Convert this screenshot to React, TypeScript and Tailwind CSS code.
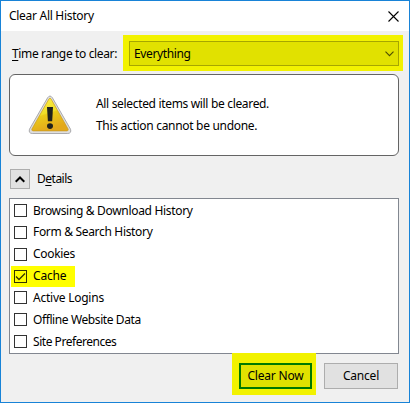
import React from "react";

const items = [
  { label: "Browsing & Download History", spacing: "tracking-[-0.32px]" },
  { label: "Form & Search History", spacing: "tracking-[-0.32px]" },
  { label: "Cookies", spacing: "tracking-[-0.3px]" },
  { label: "Cache", spacing: "tracking-[-0.2px]", checked: true },
  { label: "Active Logins", spacing: "tracking-[-0.24px]" },
  { label: "Offline Website Data", spacing: "tracking-[-0.4px]" },
  { label: "Site Preferences", spacing: "tracking-[-0.46px]" },
];

function WarningIcon() {
  return (
    <svg width="44" height="40" viewBox="0 0 44 40">
      <defs>
        <linearGradient id="gold" x1="0" y1="0" x2="0.35" y2="1">
          <stop offset="0" stopColor="#fff04a" />
          <stop offset="0.53" stopColor="#f0de28" />
          <stop offset="0.57" stopColor="#ebcb18" />
          <stop offset="1" stopColor="#e3a81c" />
        </linearGradient>
      </defs>
      <path d="M19.7 2.6Q22 -0.5 24.3 2.6L42.5 34.2Q43.7 38.3 39.8 38.5H4.2Q.3 38.3 1.5 34.2Z" fill="#dededf" stroke="#aaaaad" />
      <path d="M20.7 4.3Q22 1.9 23.3 4.3L40.1 34Q40.7 35.7 39 35.9H5Q3.3 35.7 3.9 34Z" fill="url(#gold)" stroke="#c99b20" strokeWidth=".7" />
      <path d="M19 12H25L24.2 26.2H19.9Z" fill="#20211d" />
      <ellipse cx="22" cy="31.1" rx="3" ry="2.8" fill="#20211d" />
    </svg>
  );
}

export default function App() {
  return (
    <div className="flex h-[403px] w-[410px] flex-col overflow-hidden border border-[#1883d7] bg-[#f0f0f0] font-['Noto_Sans','Open_Sans',sans-serif] text-[12px] leading-4 whitespace-nowrap text-black">
      <header className="flex h-[30px] shrink-0 items-center justify-between bg-white pr-[10px] pl-2">
        <h1 className="tracking-[-0.29px]">Clear All History</h1>
        <svg width="11" height="11" viewBox="0 0 11 11" stroke="#000" strokeWidth="1.1">
          <path d="M.5 .5L10.5 10.5M10.5 .5L.5 10.5" />
        </svg>
      </header>
      <div className="mt-1 flex h-9 shrink-0 items-center pl-[11px]">
        <label className="w-[111px] pt-px tracking-[-0.36px]">
          <span className="underline underline-offset-2">T</span>ime range to clear:
        </label>
        <div className="h-9 w-[280px] bg-[#f2f200] p-1.5 pr-1">
          <div className="flex h-[25px] w-[270px] items-center justify-between border border-[#a6a600] bg-[#e1e100] pr-1 pl-1">
            <span className="pt-px tracking-[-0.38px]">Everything</span>
            <svg width="9" height="6" viewBox="0 0 9 6" fill="none" stroke="#4d4d00" strokeWidth="1.1">
              <path d="M.5 .7L4.5 4.7L8.5 .7" />
            </svg>
          </div>
        </div>
      </div>
      <section className="mt-[3px] ml-2 flex h-[82px] w-[390px] shrink-0 items-center rounded-[6px] border border-[#646464] bg-white pl-[18px]">
        <WarningIcon />
        <div className="ml-6 leading-[22px]">
          <p className="tracking-[-0.33px]">All selected items will be cleared.</p>
          <p className="tracking-[-0.3px]">This action cannot be undone.</p>
        </div>
      </section>
      <div className="mt-[13px] ml-[9px] flex h-5 shrink-0 items-center gap-[7px]">
        <button className="flex h-5 w-5 items-center justify-center border border-[#adadad] bg-[#e1e1e1]">
          <svg width="10" height="7" viewBox="0 0 10 7" fill="none" stroke="#000" strokeWidth="2">
            <path d="M.7 5.8L5 1.5L9.3 5.8" />
          </svg>
        </button>
        <span className="tracking-[-0.5px]">D<span className="underline underline-offset-2">e</span>tails</span>
      </div>
      <section className="mt-[9px] ml-2 flex h-[156px] w-[390px] shrink-0 flex-col border border-[#828790] bg-white pt-px pl-px">
        {items.map((item) => (
          <label key={item.label} className="flex h-[22px] items-start">
            <span className={`flex h-[21px] items-center gap-1.5 pl-[3px] ${item.checked ? "w-16 bg-[#ffff00]" : ""}`}>
              <span className={`flex h-[13px] w-[13px] shrink-0 items-center justify-center border ${item.checked ? "border-[#333300]" : "border-[#333333]"}`}>
                {item.checked && (
                  <svg width="11" height="11" viewBox="0 0 11 11" fill="none" stroke="#333300" strokeWidth="1.3">
                    <path d="M1 5.5L4 8.5L10 2.5" />
                  </svg>
                )}
              </span>
              <span className={item.spacing}>{item.label}</span>
            </span>
          </label>
        ))}
      </section>
      <footer className="-mt-px ml-[231px] flex h-[42px] shrink-0">
        <div className="w-[84px] bg-[#f2f200] pt-[10px] pl-[7px]">
          <button className="flex h-[26px] w-[73px] items-center justify-center border-2 border-[#007800] bg-[#e1e100] tracking-[-0.2px]">Clear Now</button>
        </div>
        <button className="mt-[10px] ml-2 flex h-[26px] w-[74px] items-center justify-center border border-[#adadad] bg-[#e1e1e1] tracking-[-0.2px]">Cancel</button>
      </footer>
    </div>
  );
}
